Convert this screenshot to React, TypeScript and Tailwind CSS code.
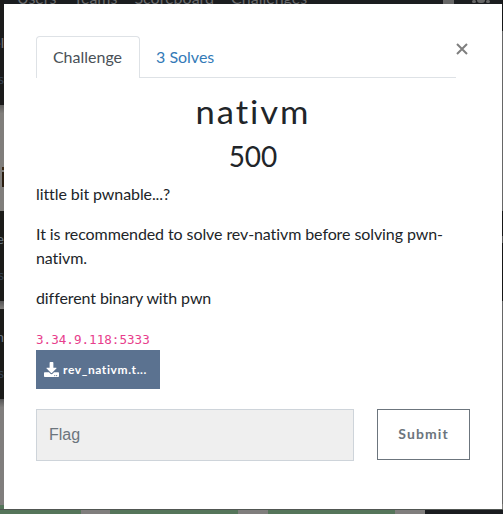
import React from "react";

const lato = "font-['Lato',sans-serif]";

function NavItem({ children }: { children: React.ReactNode }) {
  return <span>{children}</span>;
}

function Backdrop() {
  return (
    <div className="flex h-[514px] w-[503px] flex-col overflow-hidden bg-[#807e7b]">
      <div className="flex min-h-0 flex-1 justify-between">
        <div className="flex w-1 shrink-0 flex-col overflow-hidden">
          <div className="h-[105px] shrink-0 bg-[#1b1b1b]">
            <div className="flex h-full flex-col items-end pt-[33px] text-[14px] leading-5 text-[#777]">
              <span>el</span>
              <span className="mt-4 text-[#34404f]">s</span>
            </div>
          </div>
          <div className="flex h-[106px] shrink-0 justify-end bg-gradient-to-b from-[#605f5d] via-[#807e7b] via-8% to-[#807e7b] pt-[62px]">
            <div className="flex w-0.5 flex-col gap-0.5">
              <i className="h-[3px] bg-[#3b2813]" />
              <i className="h-[15px] bg-[#2a1d0f]" />
            </div>
          </div>
          <div className="flex h-[90px] shrink-0 flex-col items-end bg-[#1b1b19] pt-[18px] text-[14px] leading-5 text-[#687680]">
            <span>oe</span>
            <span className="mt-4 text-[#34404f]">s</span>
          </div>
          <div className="h-2 shrink-0 bg-gradient-to-b from-[#555] to-[#807e7b]" />
          <div className="flex h-[90px] shrink-0 flex-col items-end bg-[#1b1b19] pt-[18px] text-[14px] leading-5 text-[#687680]">
            <span>m</span>
            <span className="mt-4 text-[#34404f]">s</span>
          </div>
          <div className="h-[106px] shrink-0 bg-gradient-to-b from-[#555] via-[#807e7d] via-8% to-[#807e7d]" />
          <div className="flex-1 bg-[#55755a]" />
        </div>
        <div className={`${lato} flex h-1 flex-1 overflow-hidden bg-[#1b1d20] pl-[13px] text-[16px] leading-[18px] text-[#696a6c]`}>
          <div className="-mt-[11px] flex gap-[17px]">
            <NavItem>Users</NavItem>
            <NavItem>Teams</NavItem>
            <NavItem>Scoreboard</NavItem>
            <NavItem>Challenges</NavItem>
          </div>
          <div className="ml-auto flex gap-[18px] pr-3">
            <span className="h-1 w-[11px] bg-[#666]" />
            <span className="flex h-1 gap-px">
              <i className="h-[3px] w-1 rounded-full bg-[#666]" />
              <i className="h-[3px] w-2 rounded-b-full bg-[#666]" />
              <i className="h-[3px] w-1 rounded-full bg-[#666]" />
            </span>
          </div>
        </div>
        <div className="flex w-px shrink-0 flex-col">
          <div className="h-[31px] bg-[#151617]" />
          <div className="h-[180px] bg-[#666]" />
          <div className="h-[25px] bg-[#161616]" />
          <div className="h-[7px] bg-[#555]" />
          <div className="h-[58px] bg-[#161616]" />
          <div className="h-[203px] bg-[#666]" />
        </div>
      </div>
      <div className="flex h-[5px] shrink-0 border-t border-[#515652] bg-[#807e7d]">
        <div className="mr-[29px] w-[81px] bg-[#55755a]" />
        <div className="mr-[30px] w-[128px] bg-[#55755a]" />
        <div className="mr-[30px] w-[127px] bg-[#55755a]" />
        <div className="flex-1 bg-[#1a1c20]" />
      </div>
    </div>
  );
}

function DownloadIcon() {
  return (
    <svg viewBox="0 0 512 512" className="h-[15px] w-[15px] shrink-0" fill="currentColor">
      <path d="M216 0h80c13.300 0 24 10.700 24 24v168h87.700c17.800 0 26.700 21.500 14.100 34.100L269.700 378.300c-7.500 7.500-19.800 7.500-27.300 0L90.100 226.100c-12.600-12.600-3.700-34.100 14.100-34.100H192V24c0-13.300 10.700-24 24-24zm296 376v112c0 13.300-10.700 24-24 24H24c-13.300 0-24-10.700-24-24V376c0-13.300 10.700-24 24-24h146.700l49 49c20.100 20.100 52.500 20.100 72.600 0l49-49H488c13.300 0 24 10.700 24 24zm-124 88c0-11-9-20-20-20s-20 9-20 20 9 20 20 20 20-9 20-20zm64 0c0-11-9-20-20-20s-20 9-20 20 9 20 20 20 20-9 20-20z" />
    </svg>
  );
}

function ChallengeDialog() {
  return (
    <div role="dialog" className={`${lato} absolute left-1 top-1 h-[505px] w-[498px] bg-white px-8 pt-8 text-[16px] leading-6 text-[#212529]`}>
      <div className="flex">
        <div className="flex h-[42px] w-[420px] shrink-0">
          <button className="w-[104px] rounded-t border border-b-0 border-[#dee2e6] pb-0.5 pr-px text-[#495057]">Challenge</button>
          <div className="flex-1 border-b border-[#dee2e6]">
            <button className="h-[42px] pl-4 pr-4 text-[#337ab7]">3 Solves</button>
          </div>
        </div>
        <button aria-label="Close" className="-mt-px flex h-6 w-3 items-center justify-center text-[#7f7f7f]">
          <svg viewBox="0 0 12 12" className="mt-[3px] h-3 w-3 shrink-0" fill="none" stroke="currentColor" strokeWidth="2">
            <path d="M1 1l10 10M11 1L1 11" />
          </svg>
        </button>
      </div>
      <h2 className="mt-[13px] h-[43px] scale-x-[1.08] text-center text-[32px] leading-[42px] tracking-[1.800px]">nativm</h2>
      <h3 className="h-[48px] text-center text-[28px] leading-[45px]">500</h3>
      <div className="tracking-[-0.090px]">
        <p className="mb-4">little bit pwnable...?</p>
        <p className="mb-4">It is recommended to solve rev-nativm before solving pwn-nativm.</p>
        <p className="mb-4">different binary with pwn</p>
      </div>
      <code className="block h-6 font-['DejaVu_Sans_Mono',monospace] text-[12.600px] leading-[27px] text-[#e83e8c]">3.34.9.118:5333</code>
      <button className="flex h-[39px] w-[124px] items-center gap-1 whitespace-nowrap bg-[#5b7290] px-2 text-[12px] font-bold tracking-[0.600px] text-white">
        <DownloadIcon />
        <span>rev_nativm.t...</span>
      </button>
      <div className="mt-5 flex items-start justify-between">
        <input placeholder="Flag" className="h-[52px] w-[318px] border border-[#ced4da] bg-[#efefef] px-3 font-['Liberation_Sans',sans-serif] text-[16px] placeholder:text-[#6c757d]" />
        <button className="h-[51px] w-[93px] border border-[#6c757d] pb-0.5 text-[14px] font-bold tracking-[1.100px] text-[#6c757d]">Submit</button>
      </div>
    </div>
  );
}

export default function App() {
  return (
    <main className={`${lato} relative h-[514px] w-[503px] overflow-hidden`}>
      <Backdrop />
      <ChallengeDialog />
    </main>
  );
}
